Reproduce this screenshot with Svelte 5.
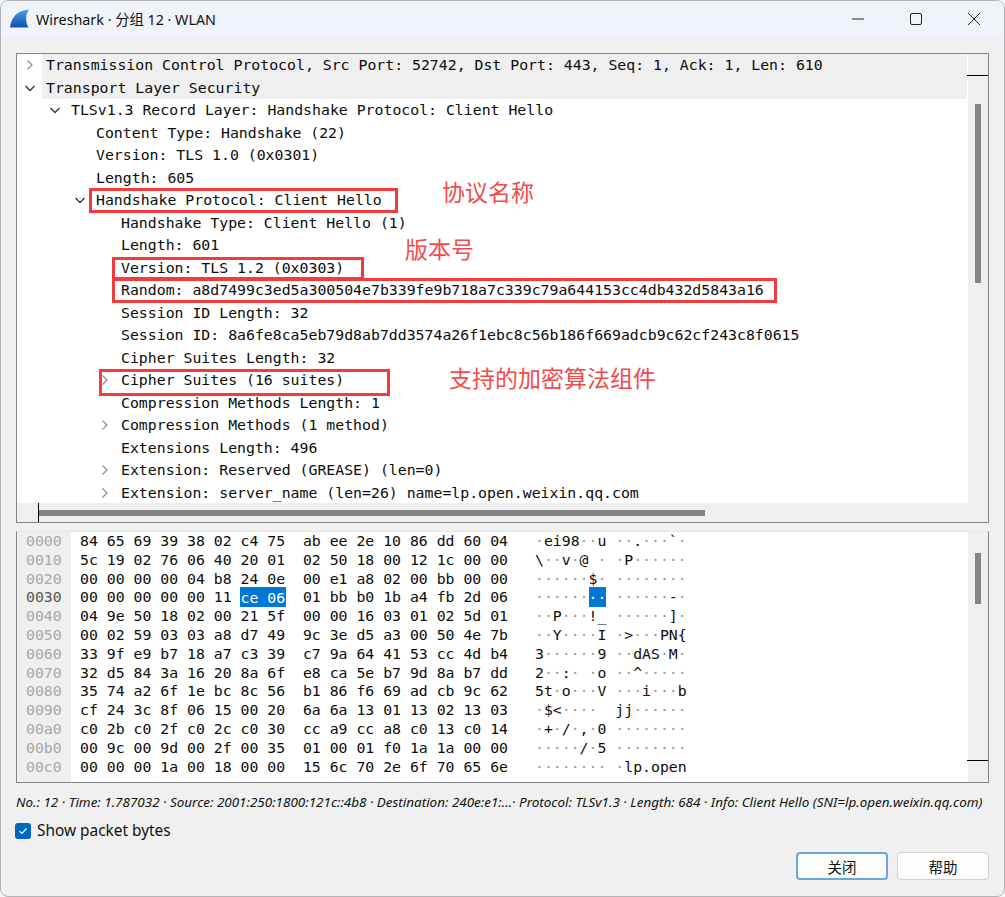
<script>
  // Packet details tree: depth, expanded state (null = leaf), text
  const treeRows = [
    { depth: 0, open: false, text: "Transmission Control Protocol, Src Port: 52742, Dst Port: 443, Seq: 1, Ack: 1, Len: 610", hl: true },
    { depth: 0, open: true, text: "Transport Layer Security", hl: true },
    { depth: 1, open: true, text: "TLSv1.3 Record Layer: Handshake Protocol: Client Hello" },
    { depth: 2, open: null, text: "Content Type: Handshake (22)" },
    { depth: 2, open: null, text: "Version: TLS 1.0 (0x0301)" },
    { depth: 2, open: null, text: "Length: 605" },
    { depth: 2, open: true, text: "Handshake Protocol: Client Hello" },
    { depth: 3, open: null, text: "Handshake Type: Client Hello (1)" },
    { depth: 3, open: null, text: "Length: 601" },
    { depth: 3, open: null, text: "Version: TLS 1.2 (0x0303)" },
    { depth: 3, open: null, text: "Random: a8d7499c3ed5a300504e7b339fe9b718a7c339c79a644153cc4db432d5843a16" },
    { depth: 3, open: null, text: "Session ID Length: 32" },
    { depth: 3, open: null, text: "Session ID: 8a6fe8ca5eb79d8ab7dd3574a26f1ebc8c56b186f669adcb9c62cf243c8f0615" },
    { depth: 3, open: null, text: "Cipher Suites Length: 32" },
    { depth: 3, open: false, text: "Cipher Suites (16 suites)" },
    { depth: 3, open: null, text: "Compression Methods Length: 1" },
    { depth: 3, open: false, text: "Compression Methods (1 method)" },
    { depth: 3, open: null, text: "Extensions Length: 496" },
    { depth: 3, open: false, text: "Extension: Reserved (GREASE) (len=0)" },
    { depth: 3, open: false, text: "Extension: server_name (len=26) name=lp.open.weixin.qq.com" }
  ];

  const hexDump = [
    "84 65 69 39 38 02 c4 75 ab ee 2e 10 86 dd 60 04",
    "5c 19 02 76 06 40 20 01 02 50 18 00 12 1c 00 00",
    "00 00 00 00 04 b8 24 0e 00 e1 a8 02 00 bb 00 00",
    "00 00 00 00 00 11 ce 06 01 bb b0 1b a4 fb 2d 06",
    "04 9e 50 18 02 00 21 5f 00 00 16 03 01 02 5d 01",
    "00 02 59 03 03 a8 d7 49 9c 3e d5 a3 00 50 4e 7b",
    "33 9f e9 b7 18 a7 c3 39 c7 9a 64 41 53 cc 4d b4",
    "32 d5 84 3a 16 20 8a 6f e8 ca 5e b7 9d 8a b7 dd",
    "35 74 a2 6f 1e bc 8c 56 b1 86 f6 69 ad cb 9c 62",
    "cf 24 3c 8f 06 15 00 20 6a 6a 13 01 13 02 13 03",
    "c0 2b c0 2f c0 2c c0 30 cc a9 cc a8 c0 13 c0 14",
    "00 9c 00 9d 00 2f 00 35 01 00 01 f0 1a 1a 00 00",
    "00 00 00 1a 00 18 00 00 15 6c 70 2e 6f 70 65 6e"
  ];

  const selStart = 0x36;
  const selEnd = 0x37;

  const isSel = (i) => i >= selStart && i <= selEnd;

  const toChar = (b) => {
    const v = parseInt(b, 16);
    return v >= 0x20 && v < 0x7f ? String.fromCharCode(v) : "·";
  };

  const hexRows = hexDump.map((line, r) => {
    const bytes = line.split(" ");
    return {
      offset: (r * 16).toString(16).padStart(4, "0"),
      active: bytes.some((_, i) => isSel(r * 16 + i)),
      bytes: bytes.map((b, i) => ({
        hex: b,
        ch: toChar(b),
        sel: isSel(r * 16 + i),
        // the space between two selected bytes is highlighted too
        inner: isSel(r * 16 + i) && isSel(r * 16 + i + 1) && i !== 7 ? " " : "",
        sep: i === 15 ? "" : i === 7 ? "  " : isSel(r * 16 + i) && isSel(r * 16 + i + 1) ? "" : " ",
        asciiSep: i === 7 ? " " : ""
      }))
    };
  });
</script>

<div class="window">
  <div class="titlebar">
    <svg class="logo" width="20" height="20" viewBox="0 0 20 20">
      <defs>
        <linearGradient id="fin" x1="0" y1="0" x2="0" y2="1">
          <stop offset="0" stop-color="#4f9de6" />
          <stop offset="1" stop-color="#0c50b4" />
        </linearGradient>
      </defs>
      <path d="M0 18.500C1.500 9 6 1.500 19 .5c-3.500 5-4 12-.5 18z" fill="url(#fin)" />
    </svg>
    <span class="title">Wireshark · 分组 12 · WLAN</span>
    <div class="controls">
      <svg width="14" height="14" viewBox="0 0 14 14"><path d="M1 7h12" stroke="#222" fill="none" /></svg>
      <svg width="14" height="14" viewBox="0 0 14 14"><rect x="1.500" y="1.500" width="11" height="11" rx="1.500" stroke="#222" fill="none" /></svg>
      <svg width="14" height="14" viewBox="0 0 14 14"><path d="M1 1l12 12M13 1L1 13" stroke="#222" fill="none" /></svg>
    </div>
  </div>

  <div class="content">
    <div class="panel tree-panel">
      <div class="tree-top">
        <div class="tree">
          {#each treeRows as row}
            <div class="tree-row" class:hl={row.hl} style="padding-left: {row.depth * 25}px">
              <span class="arrow">
                {#if row.open === true}
                  <svg width="12" height="12" viewBox="0 0 12 12"><path d="M1.500 4L6 8.500 10.500 4" stroke="#333" stroke-width="1.300" fill="none" /></svg>
                {:else if row.open === false}
                  <svg width="12" height="12" viewBox="0 0 12 12"><path d="M3.500 1.500L8 6l-4.500 4.500" stroke="#8f8f8f" stroke-width="1.300" fill="none" /></svg>
                {/if}
              </span>
              <span class="tree-text">{row.text}</span>
            </div>
          {/each}
        </div>
        <div class="vscroll">
          <div class="vscroll-head"></div>
          <div class="thumb tree-thumb"></div>
        </div>
      </div>
      <div class="hscroll">
        <div class="hscroll-head"></div>
        <div class="hthumb"></div>
      </div>

      <!-- red marks drawn over the screenshot -->
      <div class="mark m1"></div>
      <div class="mark m2"></div>
      <div class="mark m3"></div>
      <div class="mark m4"></div>
      <span class="note n1">协议名称</span>
      <span class="note n2">版本号</span>
      <span class="note n3">支持的加密算法组件</span>
    </div>

    <div class="panel hex-panel">
      <div class="hex">
        {#each hexRows as row}
          <div class="hex-row">
            <span class="offset" class:active={row.active}>{row.offset}</span>
            <span class="bytes">{#each row.bytes as b}<span class:sel={b.sel}>{b.hex}{b.inner}</span>{b.sep}{/each}</span>
            <span class="ascii">{#each row.bytes as b}<span class:sel={b.sel} class:dim={b.ch === "·"}>{b.ch}</span>{b.asciiSep}{/each}</span>
          </div>
        {/each}
      </div>
      <div class="vscroll hex-scroll">
        <div class="thumb hex-thumb"></div>
        <div class="hex-line"></div>
      </div>
    </div>

    <div class="status">No.: 12 · Time: 1.787032 · Source: 2001:250:1800:121c::4b8 · Destination: 240e:e1:...· Protocol: TLSv1.3 · Length: 684 · Info: Client Hello (SNI=lp.open.weixin.qq.com)</div>

    <label class="check">
      <span class="box">
        <svg width="10" height="10" viewBox="0 0 10 10"><path d="M1.500 5.200L4 7.500 8.500 2.500" stroke="#fff" stroke-width="1.200" fill="none" /></svg>
      </span>
      Show packet bytes
    </label>

    <div class="buttons">
      <button class="btn primary">关闭</button>
      <button class="btn">帮助</button>
    </div>
  </div>
</div>

<style>
  :global(body) {
    margin: 0;
    background: #f4f5f7;
  }
  .window {
    box-sizing: border-box;
    width: 1005px;
    height: 897px;
    display: flex;
    flex-direction: column;
    background: #f0f0f0;
    border: 1px solid #b4b4b8;
    border-radius: 8px;
    overflow: hidden;
    font-family: "Noto Sans", "Noto Sans CJK SC", sans-serif;
    color: #111;
  }
  .titlebar {
    height: 36px;
    flex: none;
    display: flex;
    align-items: center;
    background: #f0f3f9;
    padding-left: 9px;
  }
  .logo {
    margin-right: 6px;
  }
  .title {
    font-size: 14.300px;
    margin-bottom: 2px;
  }
  .controls {
    margin-left: auto;
    display: flex;
    gap: 44px;
    padding-right: 23px;
  }
  .content {
    flex: 1;
    display: flex;
    flex-direction: column;
    padding: 16px 15px 0;
  }
  .panel {
    box-sizing: border-box;
    width: 973px;
    border: 1px solid #85858f;
    flex: none;
  }
  .tree-panel {
    position: relative;
    height: 470px;
    display: flex;
    flex-direction: column;
    background: #fff;
  }
  .tree-top {
    flex: 1;
    display: flex;
    min-height: 0;
  }
  .tree {
    flex: 1;
    overflow: hidden;
    font-family: "DejaVu Sans Mono", monospace;
    font-size: 14.840px;
  }
  .tree-row {
    height: 22.500px;
    display: flex;
    align-items: center;
    white-space: pre;
    color: #0c0c0c;
  }
  .tree-row.hl {
    background: linear-gradient(to right, #fff 25px, #efefef 25px);
  }
  .tree-text {
    margin-bottom: 1px;
  }
  .arrow {
    width: 29px;
    flex: none;
    display: flex;
    padding-left: 7px;
    box-sizing: border-box;
  }
  .vscroll {
    width: 21px;
    flex: none;
    background: #efefef;
    border-left: 1px solid #fff;
    box-sizing: border-box;
  }
  .vscroll-head {
    height: 21px;
    border-bottom: 1px solid #000;
    margin-left: -1px;
  }
  .thumb {
    width: 6px;
    margin-left: 7px;
    background: #858585;
  }
  .tree-thumb {
    height: 179px;
    margin-top: 28px;
  }
  .hscroll {
    height: 19px;
    flex: none;
    display: flex;
    background: #efefef;
  }
  .hscroll-head {
    width: 21px;
    flex: none;
    border-right: 1px solid #000;
  }
  .hthumb {
    width: 666px;
    height: 6px;
    margin-top: 7px;
    background: #858585;
  }
  .mark {
    position: absolute;
    box-sizing: border-box;
    border: 3px solid #f33b3b;
  }
  .m1 {
    left: 72px;
    top: 134px;
    width: 309px;
    height: 25px;
  }
  .m2 {
    left: 95px;
    top: 203px;
    width: 252px;
    height: 23px;
  }
  .m3 {
    left: 95px;
    top: 224px;
    width: 665px;
    height: 25px;
  }
  .m4 {
    left: 82px;
    top: 315px;
    width: 291px;
    height: 27px;
  }
  .note {
    position: absolute;
    color: #f44a4a;
    font-family: "Noto Sans CJK SC", sans-serif;
    font-size: 23px;
    line-height: 28px;
    white-space: nowrap;
  }
  .n1 {
    left: 425px;
    top: 123px;
  }
  .n2 {
    left: 388px;
    top: 180px;
  }
  .n3 {
    left: 432px;
    top: 309px;
  }
  .hex-panel {
    height: 252px;
    margin-top: 8px;
    display: flex;
    background: #fff;
    border-top-color: #e6e6e6;
  }
  .hex {
    flex: 1;
    overflow: hidden;
    font-family: "DejaVu Sans Mono", monospace;
    font-size: 14.800px;
    background: linear-gradient(to right, #efefef 54px, #fff 54px);
  }
  .hex-row {
    height: 18.800px;
    line-height: 18.800px;
    white-space: pre;
    display: flex;
    color: #0c0c0c;
  }
  .offset {
    width: 54px;
    box-sizing: border-box;
    padding-left: 9px;
    color: #a8a8a8;
    flex: none;
  }
  .offset.active {
    color: #555;
  }
  .bytes {
    margin-left: 9px;
    width: 455px;
    flex: none;
  }
  .sel {
    background: #0078d4;
    color: #fff;
    padding: 1.500px 0;
  }
  .bytes .sel {
    padding: 1.500px 1px;
    margin: 0 -1px;
  }
  .dim {
    color: #9a9a9a;
  }
  .sel.dim {
    color: #fff;
  }
  .hex-thumb {
    height: 51px;
    margin-top: 21px;
  }
  .hex-line {
    margin-top: 156px;
    margin-left: -1px;
    height: 1px;
    background: #000;
  }
  .status {
    margin-top: 10px;
    font-size: 13.440px;
    font-style: italic;
    line-height: 18px;
    white-space: nowrap;
  }
  .check {
    margin-top: 11px;
    margin-left: -1px;
    display: flex;
    align-items: center;
    gap: 6px;
    font-size: 15.400px;
    line-height: 18px;
  }
  .box {
    box-sizing: border-box;
    width: 16px;
    height: 16px;
    border-radius: 3px;
    background: #0067c0;
    display: flex;
    align-items: center;
    justify-content: center;
  }
  .buttons {
    margin-top: 12px;
    display: flex;
    justify-content: flex-end;
    gap: 9px;
  }
  .btn {
    box-sizing: border-box;
    width: 92px;
    height: 28px;
    padding: 0;
    background: #fdfdfd;
    border: 1px solid #d0d0d0;
    border-radius: 4px;
    font-family: "Noto Sans CJK SC", sans-serif;
    font-size: 14.500px;
    color: #111;
  }
  .btn.primary {
    border: 2px solid #67a8e0;
  }
</style>
